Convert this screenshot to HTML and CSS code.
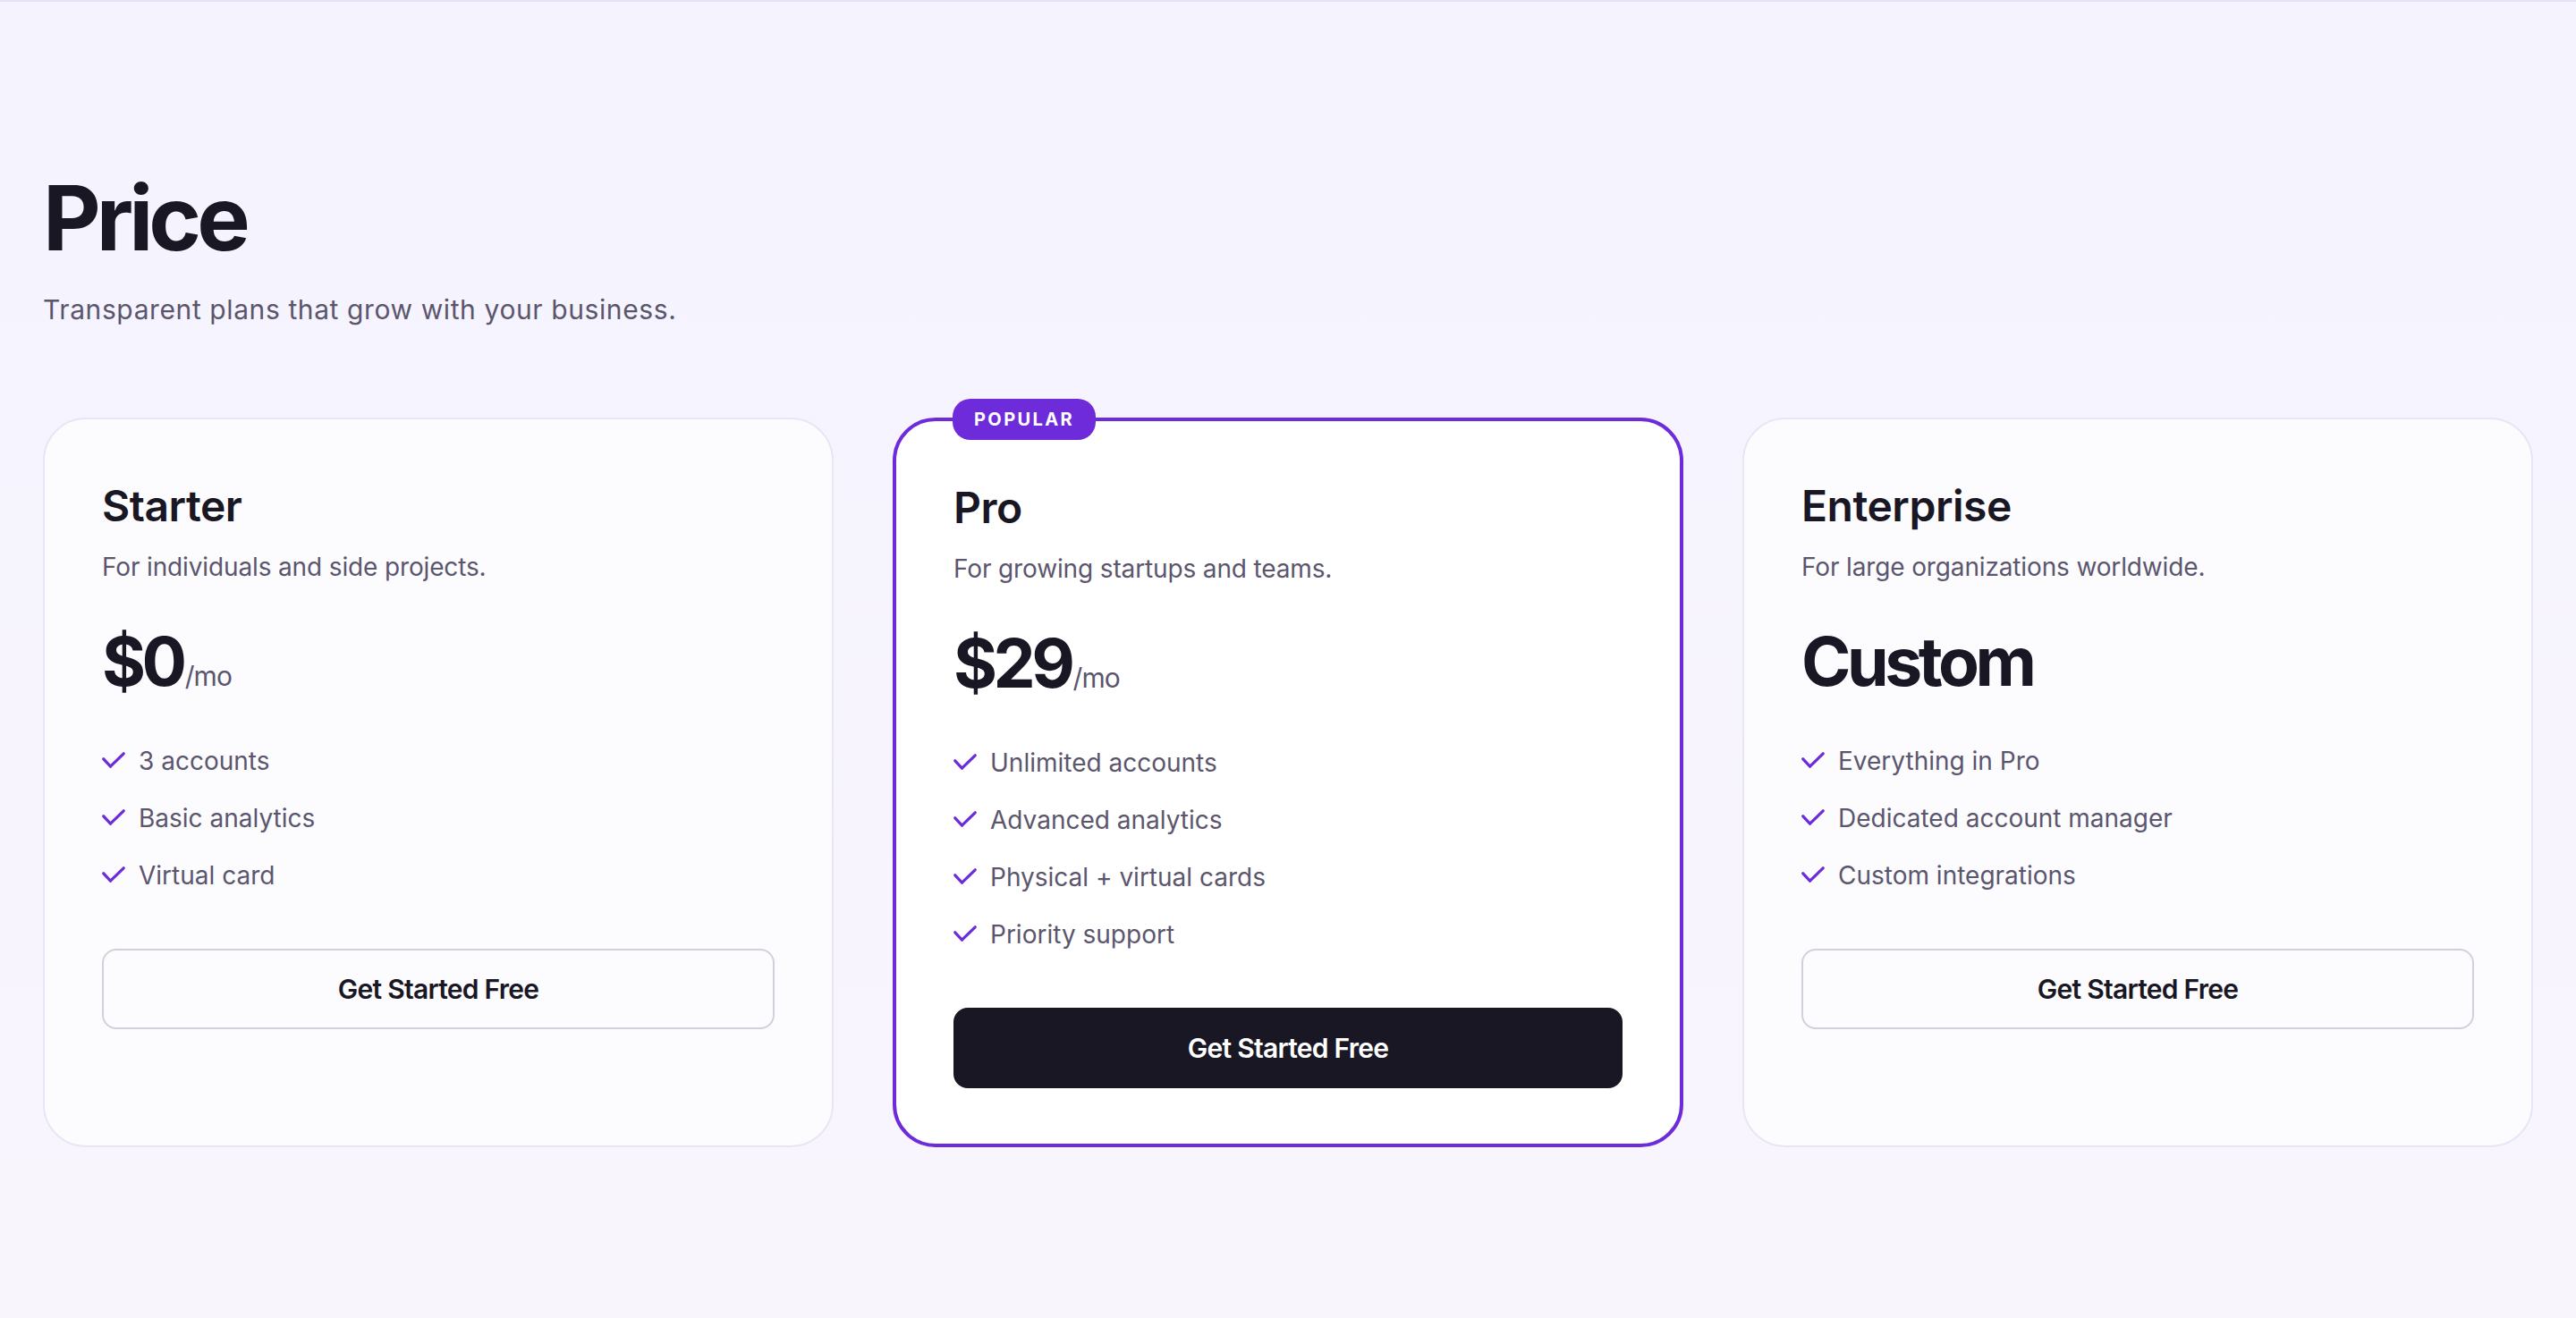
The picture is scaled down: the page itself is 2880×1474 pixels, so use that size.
FILE: index.html
```html
<!DOCTYPE html>
<html lang="en">
<head>
    <meta charset="UTF-8">
    <meta name="viewport" content="width=device-width, initial-scale=1.0">
    <title>Price</title>
    <link rel="stylesheet" href="styles.css">
</head>
<body>
    <section class="pricing">
        <h1 class="pricing-title">Price</h1>
        <p class="pricing-subtitle">Transparent plans that grow with your business.</p>

        <div class="plans">
            <div class="plan">
                <h2 class="plan-name">Starter</h2>
                <p class="plan-desc">For individuals and side projects.</p>
                <div class="plan-price">$0<span class="per">/mo</span></div>
                <ul class="features">
                    <li><svg class="check" viewBox="0 0 26 20"><polyline points="1.8,7.8 9.5,16.2 24.2,1.8"/></svg>3 accounts</li>
                    <li><svg class="check" viewBox="0 0 26 20"><polyline points="1.8,7.8 9.5,16.2 24.2,1.8"/></svg>Basic analytics</li>
                    <li><svg class="check" viewBox="0 0 26 20"><polyline points="1.8,7.8 9.5,16.2 24.2,1.8"/></svg>Virtual card</li>
                </ul>
                <button class="plan-btn">Get Started Free</button>
            </div>

            <div class="plan plan-popular">
                <span class="badge">POPULAR</span>
                <h2 class="plan-name">Pro</h2>
                <p class="plan-desc">For growing startups and teams.</p>
                <div class="plan-price">$29<span class="per">/mo</span></div>
                <ul class="features">
                    <li><svg class="check" viewBox="0 0 26 20"><polyline points="1.8,7.8 9.5,16.2 24.2,1.8"/></svg>Unlimited accounts</li>
                    <li><svg class="check" viewBox="0 0 26 20"><polyline points="1.8,7.8 9.5,16.2 24.2,1.8"/></svg>Advanced analytics</li>
                    <li><svg class="check" viewBox="0 0 26 20"><polyline points="1.8,7.8 9.5,16.2 24.2,1.8"/></svg>Physical + virtual cards</li>
                    <li><svg class="check" viewBox="0 0 26 20"><polyline points="1.8,7.8 9.5,16.2 24.2,1.8"/></svg>Priority support</li>
                </ul>
                <button class="plan-btn plan-btn-dark">Get Started Free</button>
            </div>

            <div class="plan">
                <h2 class="plan-name">Enterprise</h2>
                <p class="plan-desc">For large organizations worldwide.</p>
                <div class="plan-price">Custom</div>
                <ul class="features">
                    <li><svg class="check" viewBox="0 0 26 20"><polyline points="1.8,7.8 9.5,16.2 24.2,1.8"/></svg>Everything in Pro</li>
                    <li><svg class="check" viewBox="0 0 26 20"><polyline points="1.8,7.8 9.5,16.2 24.2,1.8"/></svg>Dedicated account manager</li>
                    <li><svg class="check" viewBox="0 0 26 20"><polyline points="1.8,7.8 9.5,16.2 24.2,1.8"/></svg>Custom integrations</li>
                </ul>
                <button class="plan-btn">Get Started Free</button>
            </div>
        </div>
    </section>
</body>
</html>
```

FILE: styles.css
```css
* {
    box-sizing: border-box;
}

html, body {
    height: 100%;
}

body {
    margin: 0;
    border-top: 2px solid #e5e1f5;
    background: linear-gradient(#f5f3fe, #f8f5fd);
    color: #1a1724;
    font-family: Inter, "Liberation Sans", sans-serif;
}

.pricing {
    padding: 187px 48px 0;
}

.pricing-title {
    margin: 0;
    font-size: 100px;
    line-height: 110px;
    font-weight: 700;
    letter-spacing: -0.05em;
}

.pricing-subtitle {
    margin: 26px 0 0;
    font-size: 30px;
    line-height: 42px;
    color: #5b566d;
    letter-spacing: 0.02em;
}

.plans {
    display: grid;
    grid-template-columns: repeat(3, 1fr);
    gap: 66px;
    margin-top: 100px;
}

.plan {
    position: relative;
    display: flex;
    flex-direction: column;
    align-items: flex-start;
    padding: 68px 64px 62px;
    background-color: #fcfcff;
    border: 2px solid #e8e5f4;
    border-radius: 48px;
}

.plan-popular {
    background-color: #fff;
    border: 4px solid #6d2bd9;
}

.badge {
    position: absolute;
    top: -25px;
    left: 63px;
    height: 46px;
    padding: 0 24px;
    border-radius: 20px;
    background-color: #6d2bd9;
    color: #fff;
    font-size: 20px;
    line-height: 46px;
    font-weight: 700;
    letter-spacing: 0.12em;
}

.plan-name {
    margin: 0;
    font-size: 48px;
    line-height: 57.6px;
    font-weight: 600;
    letter-spacing: -0.01em;
}

.plan-desc {
    margin: 18px 0 0;
    font-size: 28px;
    line-height: 42px;
    color: #5b566d;
    letter-spacing: -0.005em;
}

.plan-price {
    margin-top: 46px;
    font-size: 75px;
    line-height: 78px;
    font-weight: 700;
    letter-spacing: -0.06em;
}

.per {
    margin-left: 2px;
    font-size: 30px;
    line-height: 0;
    font-weight: 400;
    color: #5b566d;
    letter-spacing: -0.03em;
}

.features {
    display: flex;
    flex-direction: column;
    gap: 24px;
    margin: 52px 0 0;
    padding: 0;
    list-style: none;
}

.features li {
    display: flex;
    align-items: center;
    gap: 15px;
    font-size: 28px;
    line-height: 40px;
    color: #5b566d;
}

.check {
    width: 26px;
    height: 20px;
    flex-shrink: 0;
    fill: none;
    stroke: #6d2bd9;
    stroke-width: 3.2;
    stroke-linecap: round;
    stroke-linejoin: round;
}

.plan-btn {
    width: 100%;
    margin-top: 62px;
    padding: 25px 20px;
    background-color: transparent;
    border: 2px solid #d2d0da;
    border-radius: 16px;
    color: #1a1724;
    font-family: inherit;
    font-size: 30px;
    line-height: 36px;
    font-weight: 600;
    letter-spacing: -0.025em;
    cursor: pointer;
}

.plan-btn-dark {
    background-color: #1a1724;
    border-color: #1a1724;
    color: #fff;
}
```
